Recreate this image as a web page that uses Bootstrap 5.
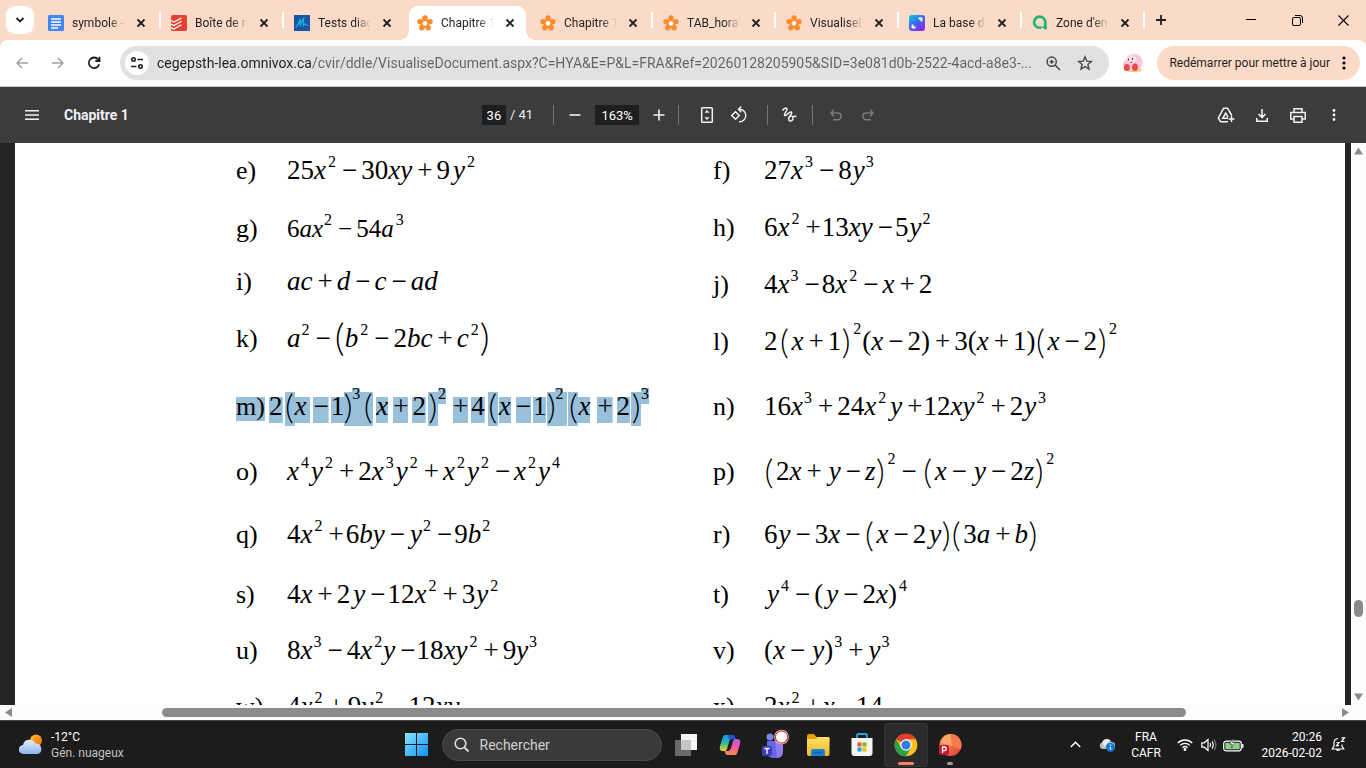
<!DOCTYPE html>
<html lang="fr">
<head>
<meta charset="utf-8">
<meta name="viewport" content="width=device-width, initial-scale=1">
<title>Chapitre 1</title>
<link href="https://cdn.jsdelivr.net/npm/bootstrap@5.3.0/dist/css/bootstrap.min.css" rel="stylesheet">
<style>
:root{--peach:#fcdac8;--ink:#1f1f1f;--sel:#98c0da}
body{font-family:Roboto,"Open Sans",sans-serif;font-size:12px;line-height:16px;color:var(--ink);background:#242424;overflow:hidden}
button{border:0;background:none;padding:0;color:inherit;display:inline-flex;align-items:center;justify-content:center;flex:none}
svg{display:block;flex:none}
input{border:0;outline:0;padding:0;min-width:0}
/* tab strip */
.tabstrip{background:var(--peach);height:40px;padding-left:6px;flex:none}
.tablist{height:34px;gap:6px;margin-left:6px}
.tab-search{width:28px;height:28px;border-radius:9px;background:#fff;margin-top:6px}
.tab-item{width:117px;height:34px;padding:0 8px;gap:8px;position:relative}
.tab-item a{color:inherit;text-decoration:none;gap:8px}
.tab-item.sepd::after{content:"";position:absolute;width:2px;height:16px;background:#fff;top:6px;right:-4px}
.tab-name{width:53px;white-space:nowrap;-webkit-mask-image:linear-gradient(90deg,#000 70%,transparent);mask-image:linear-gradient(90deg,#000 70%,transparent)}
.tab-item.current{background:#fff;border-radius:9px 9px 0 0}
.tab-x{width:16px;height:16px}
.foot{position:absolute;bottom:0;width:10px;height:10px}
.foot-l{right:100%;background:radial-gradient(circle at 0 0,transparent 10px,#fff 10px)}
.foot-r{left:100%;background:radial-gradient(circle at 100% 0,transparent 10px,#fff 10px)}
.tab-new{width:28px;height:28px}
.win-b{width:46px;height:40px}
/* address bar */
.toolbar-wrap{background:var(--peach);flex:none}
.addr{background:#fff;height:47px;border-radius:8px 8px 0 0;border-bottom:1px solid #c8c8c8;padding:0 6px 0 4px}
.nav-b{width:36px;height:34px}
.nav-b:disabled{color:#a3a3a3}
.omni{height:34px;border-radius:17px;background:#e1e1e1;margin-left:8px;padding:0 8px 0 5px}
.site-b{width:24px;height:24px;border-radius:50%;background:#fff}
.url{font-size:14px;height:34px;background:linear-gradient(90deg,#1f1f1f 155px,#5f6368 155px);-webkit-background-clip:text;background-clip:text;-webkit-text-fill-color:transparent;margin-left:8px;text-overflow:ellipsis}
.omni-b{width:32px;height:32px;color:#474747}
.avatar-b{width:48px;height:34px}
.update-b{height:34px;border-radius:17px;background:var(--peach);padding:0 14px 0 12px;gap:12px}
/* pdf bar */
.pdfbar{height:56px;background:#3c3c3c;color:#f1f1f1;font-size:13px;padding:0 16px;flex:none}
.side{flex:1 1 0}
.pdfbar h1{font-size:14px;line-height:20px;font-weight:700;margin:0 0 0 16px}
.num-in{height:20px;background:#1e1e1e;color:#fff;text-align:center}
.w-24{width:24px}
.w-44{width:44px}
.rule{width:1px;height:20px;background:#757575}
.ib{width:32px;height:32px}
.ib:disabled{color:#7b7b7b}
/* document */
.viewer{flex:1 1 0;min-height:0;background:#242424}
.sheet{margin:0 6px 0 15px;background:#fff;overflow:hidden;padding:4px 0 0 221px;display:grid;grid-template-columns:minmax(0,477px) minmax(0,1fr);color:#000;font-family:"Liberation Serif",serif}
.plist{display:grid;align-content:start}
.p-left{grid-template-rows:59px 52px 57px 68px 65px 63px 60px 56px 56px 60px}
.p-right{grid-template-rows:57px 57px 57px 65px 65px 63px 60px 56px 56px 60px}
.prob{display:flex;align-items:baseline;font-size:27px;line-height:46px;white-space:nowrap;height:46px}
.prob dt{font-weight:400;font-size:26px;width:51px;flex:none}
.prob dd{margin:0}
.narrow dd{font-size:25px}
.prob sup{font-size:16px;line-height:16px;display:inline-block;vertical-align:12px;top:0;margin:0 1px 0 2px}
.prob sup.c{margin-left:1px}
.prob sup.hi{vertical-align:16px}
.o{display:inline-block;line-height:26px;margin:0 4px 0 5px}
.o.n{margin-right:2px}
.o.k{margin-right:1px}
.bp{display:inline-flex;justify-content:center;width:10px;font-family:Lato,"Liberation Serif",serif;font-weight:300;font-size:34px;line-height:34px;vertical-align:-4px}
.bp.op{margin:0 2px}
.bp.o1{margin:0 2px 0 0}
.bp.xl{font-size:38px}
.t{margin-left:3px}
.u{margin-left:1px}
/* selected line */
.sel dt{width:33px;line-height:24px}
.sel mark{padding:0;color:#000;background:none}
.sel dt mark{background:linear-gradient(var(--sel),var(--sel)) bottom/100% 24px no-repeat}
.sel dd mark{display:inline-block;line-height:30px;height:32px;background:linear-gradient(var(--sel),var(--sel)) bottom/100% 26px no-repeat}
.sel dd mark.bp{display:inline-flex;line-height:34px;height:37px;background-size:100% 34px}
.sel dd mark.fill{width:20px;padding-right:12px;margin-right:-12px}
.sel sup{margin:0}
.sel sup mark{line-height:16px;height:18px;background-size:100% 16px}
.g1{margin-left:1px}
.g2{margin-left:2px}
.g3{margin-left:3px}
.g5{margin-left:5px}
.g7{margin-left:7px}
.g12{margin-left:12px}
.g20{margin-left:20px}
/* scrollbars */
.vbar{width:15px;background:#fcfcfc}
.hbar{height:15px;background:#fcfcfc;flex:none}
.vbar .track,.hbar .track{flex:1 1 0}
.thumb{background:#8b8b8b;border-radius:5px}
/* task bar */
.taskbar{height:48px;background:#1c1c1c;border-top:1px solid #444;color:#fff;padding:0 12px;flex:none}
.tb{width:44px;height:44px;position:relative}
.tb.on{background:#2b2b2b;border-radius:4px;box-shadow:inset 0 0 0 1px #363636}
.tb .dash{position:absolute;bottom:2px;width:16px;height:3px;border-radius:2px;background:#ff7f66}
.tb .dash.off{width:6px;background:#9a9a9a}
.find{width:220px;height:32px;border-radius:16px;background:#3a3a3a;border:1px solid #4b4b4b;margin:0 2px 0 3px;padding:0 11px;gap:10px}
.find input{background:none;color:#fff;font-size:14px;height:28px}
.find input::placeholder{color:#d0d0d0;opacity:1}
.tray-lang{width:46px}
.tray-clock{width:73px}
.muted-t{color:#c3c3c3}
</style>
<script src="https://cdn.jsdelivr.net/npm/bootstrap@5.3.0/dist/js/bootstrap.bundle.min.js"></script>
</head>
<body class="vh-100 d-flex flex-column">
<svg width="0" height="0" class="position-absolute" aria-hidden="true">
<defs>
<linearGradient id="gWin" x1="0" y1="0" x2="1" y2="1"><stop offset="0" stop-color="#8be4ff"/><stop offset="1" stop-color="#0a93f5"/></linearGradient>
<linearGradient id="gCanva" x1="0" y1="0" x2=".7" y2="1"><stop offset="0" stop-color="#00d0d8"/><stop offset=".5" stop-color="#3a6df0"/><stop offset="1" stop-color="#8a2be8"/></linearGradient>
<linearGradient id="gCloud" x1="0" y1="0" x2="0" y2="1"><stop offset="0" stop-color="#e6effc"/><stop offset="1" stop-color="#8fb3ee"/></linearGradient>
<linearGradient id="gSun" x1="0" y1="0" x2="1" y2="1"><stop offset="0" stop-color="#ffc32e"/><stop offset="1" stop-color="#f0640f"/></linearGradient>
<linearGradient id="gFold" x1="0" y1="0" x2="0" y2="1"><stop offset="0" stop-color="#ffdf6b"/><stop offset="1" stop-color="#f9b91f"/></linearGradient>
<linearGradient id="gCopA" x1="0" y1="0" x2="0" y2="1"><stop offset="0" stop-color="#1a8fe8"/><stop offset=".5" stop-color="#2fb9a0"/><stop offset="1" stop-color="#f2d21c"/></linearGradient>
<linearGradient id="gCopB" x1="0" y1="0" x2="0" y2="1"><stop offset="0" stop-color="#a45cf0"/><stop offset=".5" stop-color="#f0569c"/><stop offset="1" stop-color="#ff8a4c"/></linearGradient>
<linearGradient id="gPpt" x1="0" y1="0" x2="1" y2="1"><stop offset="0" stop-color="#ffb04f"/><stop offset="1" stop-color="#e0343f"/></linearGradient>
<symbol id="flower" viewBox="0 0 16 16"><g fill="#ff8b2e"><circle cx="8" cy="3" r="2.700"/><circle cx="13" cy="6.600" r="2.700"/><circle cx="11.200" cy="12.700" r="2.700"/><circle cx="4.800" cy="12.700" r="2.700"/><circle cx="3" cy="6.600" r="2.700"/><circle cx="8" cy="8.400" r="4.600"/></g><circle cx="8" cy="8.400" r="2.300" fill="#fff"/></symbol>
<symbol id="x" viewBox="0 0 16 16"><path d="M4.500 4.500l7 7M11.500 4.500l-7 7" stroke="currentColor" stroke-width="1.800" fill="none"/></symbol>
</defs>
</svg>

<header class="tabstrip d-flex">
<button class="tab-search" aria-label="Rechercher dans les onglets"><svg width="10" height="10" viewBox="0 0 10 10"><path d="M1.500 3l3.500 3.500L8.500 3" fill="none" stroke="currentColor" stroke-width="1.800"/></svg></button>
<nav class="tablist d-flex mt-auto flex-fill">
<div class="tab-item sepd d-flex align-items-center"><a href="#" class="d-flex"><svg width="16" height="16" viewBox="0 0 16 16"><rect width="16" height="16" rx="1.500" fill="#4285f4"/><path d="M3 4h10M3 7h10M3 10h10M3 13h7" stroke="#fff" stroke-width="1.300"/></svg><span class="tab-name">symbole -</span></a><button class="tab-x" aria-label="Fermer"><svg width="16" height="16"><use href="#x"/></svg></button></div>
<div class="tab-item sepd d-flex align-items-center"><a href="#" class="d-flex"><svg width="16" height="16" viewBox="0 0 16 16"><rect width="16" height="16" rx="2" fill="#e44332"/><path d="M0 5.500l3 1.600L10.500 3M0 9l3 1.600 7.500-4.300M0 12.500l3 1.600 7.500-4.300" stroke="#fff" stroke-width="1.300" fill="none"/></svg><span class="tab-name">Boîte de r</span></a><button class="tab-x" aria-label="Fermer"><svg width="16" height="16"><use href="#x"/></svg></button></div>
<div class="tab-item d-flex align-items-center"><a href="#" class="d-flex"><svg width="16" height="16" viewBox="0 0 16 16"><rect width="16" height="16" fill="#1c54a4"/><path d="M2 12.500Q4.500 9 6.200 4 6 8 6.200 11 8 5 9.700 3.500 9 7 9.500 10.500q1-2 1.700-2 .3 2 2.800 2" stroke="#19b5e0" stroke-width="1.200" fill="none"/></svg><span class="tab-name">Tests diag</span></a><button class="tab-x" aria-label="Fermer"><svg width="16" height="16"><use href="#x"/></svg></button></div>
<div class="tab-item current d-flex align-items-center"><span class="foot foot-l"></span><a href="#" class="d-flex"><svg width="16" height="16"><use href="#flower"/></svg><span class="tab-name">Chapitre 1</span></a><button class="tab-x" aria-label="Fermer"><svg width="16" height="16"><use href="#x"/></svg></button><span class="foot foot-r"></span></div>
<div class="tab-item sepd d-flex align-items-center"><a href="#" class="d-flex"><svg width="16" height="16"><use href="#flower"/></svg><span class="tab-name">Chapitre 1</span></a><button class="tab-x" aria-label="Fermer"><svg width="16" height="16"><use href="#x"/></svg></button></div>
<div class="tab-item sepd d-flex align-items-center"><a href="#" class="d-flex"><svg width="16" height="16"><use href="#flower"/></svg><span class="tab-name">TAB_horai</span></a><button class="tab-x" aria-label="Fermer"><svg width="16" height="16"><use href="#x"/></svg></button></div>
<div class="tab-item sepd d-flex align-items-center"><a href="#" class="d-flex"><svg width="16" height="16"><use href="#flower"/></svg><span class="tab-name">VisualiseD</span></a><button class="tab-x" aria-label="Fermer"><svg width="16" height="16"><use href="#x"/></svg></button></div>
<div class="tab-item sepd d-flex align-items-center"><a href="#" class="d-flex"><svg width="16" height="16" viewBox="0 0 16 16"><rect width="16" height="16" rx="3" fill="url(#gCanva)"/><path d="M9.500 3.500h3v3M3.500 9.500v3h3" fill="none" stroke="#fff" stroke-width="1.800"/></svg><span class="tab-name">La base de</span></a><button class="tab-x" aria-label="Fermer"><svg width="16" height="16"><use href="#x"/></svg></button></div>
<div class="tab-item sepd d-flex align-items-center"><a href="#" class="d-flex"><svg width="16" height="16" viewBox="0 0 16 16"><path d="M13.300 13.600V7.300A5.600 5.600 0 1 0 7.700 12.800h1.500" fill="none" stroke="#1fb07a" stroke-width="2.600"/><path d="M8 11.500h6.600V15z" fill="#1fb07a"/></svg><span class="tab-name">Zone d'en</span></a><button class="tab-x" aria-label="Fermer"><svg width="16" height="16"><use href="#x"/></svg></button></div>
<button class="tab-new" aria-label="Nouvel onglet"><svg width="12" height="12" viewBox="0 0 12 12"><path d="M6 1v10M1 6h10" stroke="currentColor" stroke-width="1.800"/></svg></button>
</nav>
<div class="d-flex">
<button class="win-b" aria-label="Réduire"><svg width="10" height="10" viewBox="0 0 10 10"><path d="M0 4.500h10" stroke="#000"/></svg></button>
<button class="win-b" aria-label="Restaurer"><svg width="11" height="11" viewBox="0 0 11 11"><rect x=".5" y="2.500" width="8" height="8" rx="1.500" fill="none" stroke="#000"/><path d="M3 .5h5a2.500 2.500 0 0 1 2.500 2.500v5" fill="none" stroke="#000"/></svg></button>
<button class="win-b" aria-label="Fermer la fenêtre"><svg width="11" height="11" viewBox="0 0 11 11"><path d="M.5.5l10 10M10.500.5l-10 10" stroke="#000" stroke-width="1.100"/></svg></button>
</div>
</header>

<div class="toolbar-wrap"><div class="addr d-flex align-items-center">
<button class="nav-b" disabled aria-label="Précédent"><svg width="12" height="12" viewBox="0 0 12 12"><path d="M12 6H1M6 1L1 6l5 5" fill="none" stroke="currentColor" stroke-width="1.500"/></svg></button>
<button class="nav-b" disabled aria-label="Suivant"><svg width="12" height="12" viewBox="0 0 12 12"><path d="M0 6h11M6 1l5 5-5 5" fill="none" stroke="currentColor" stroke-width="1.500"/></svg></button>
<button class="nav-b" aria-label="Actualiser"><svg width="14" height="14" viewBox="0 0 14 14"><path d="M12.200 8.300a5.300 5.300 0 1 1-1-4.900L12.300 4.800M12.500.8v4.200H8.300" fill="none" stroke="currentColor" stroke-width="1.800"/></svg></button>
<div class="omni d-flex align-items-center flex-fill">
<button class="site-b" aria-label="Informations du site"><svg width="14" height="14" viewBox="0 0 14 14" fill="none" stroke="#1f1f1f" stroke-width="1.600"><circle cx="3.500" cy="3.500" r="1.700"/><path d="M7.500 3.500H13M1 10.500h5.500"/><circle cx="10.500" cy="10.500" r="1.700"/></svg></button>
<input class="url flex-fill" aria-label="Adresse" value="cegepsth-lea.omnivox.ca/cvir/ddle/VisualiseDocument.aspx?C=HYA&amp;E=P&amp;L=FRA&amp;Ref=20260128205905&amp;SID=3e081d0b-2522-4acd-a8e3-...">
<button class="omni-b" aria-label="Zoom"><svg width="15" height="15" viewBox="0 0 15 15" fill="none" stroke="currentColor" stroke-width="1.500"><circle cx="5.700" cy="5.700" r="4.600"/><path d="M9 9l5 5"/><path d="M5.700 3.700v4M3.700 5.700h4" stroke-width="1.600"/></svg></button>
<button class="omni-b" aria-label="Ajouter aux favoris"><svg width="16" height="16" viewBox="0 0 16 16"><path d="M8 1.800l1.800 4.300 4.600.4-3.500 3 1.100 4.500L8 11.600 4 14l1.100-4.500-3.500-3 4.600-.4z" fill="none" stroke="currentColor" stroke-width="1.400"/></svg></button>
</div>
<button class="avatar-b" aria-label="Profil"><svg width="20" height="20" viewBox="0 0 20 20"><ellipse cx="11" cy="17" rx="8" ry="2" fill="#f4cf5a"/><ellipse cx="2.600" cy="11" rx="2.200" ry="3" fill="#f3b8d2"/><circle cx="11" cy="9.500" r="8.700" fill="#f8c9de"/><circle cx="9" cy="6" r="4" fill="#fbdcea"/><ellipse cx="3.800" cy="14.500" rx="3" ry="3.600" fill="#ee4a4f"/><ellipse cx="12" cy="14.300" rx="3" ry="3.700" fill="#ee4a4f"/><path d="M5.500 5.500v2M9.500 5v2" stroke="#6a3550" stroke-width="1"/><path d="M7 9.300q1 .8 2-.2" stroke="#b8406a" fill="none"/></svg></button>
<button class="update-b"><span>Redémarrer pour mettre à jour</span><svg width="4" height="14" viewBox="0 0 4 14"><circle cx="2" cy="2" r="1.600"/><circle cx="2" cy="7" r="1.600"/><circle cx="2" cy="12" r="1.600"/></svg></button>
</div></div>

<div class="pdfbar d-flex align-items-center">
<div class="side d-flex align-items-center"><button class="ib" aria-label="Menu"><svg width="14" height="10" viewBox="0 0 14 10"><path d="M0 .8h14M0 5h14M0 9.200h14" stroke="currentColor" stroke-width="1.400"/></svg></button><h1>Chapitre 1</h1></div>
<div class="d-flex align-items-center">
<input class="num-in w-24" aria-label="Page" value="36"><span class="ms-1">/&nbsp;</span><span>41</span>
<span class="rule g20"></span>
<button class="ib g5" aria-label="Zoom arrière"><svg width="12" height="12" viewBox="0 0 12 12"><path d="M.5 6h11" stroke="currentColor" stroke-width="1.600"/></svg></button>
<input class="num-in w-44 ms-1" aria-label="Niveau de zoom" value="163%">
<button class="ib ms-1" aria-label="Zoom avant"><svg width="12" height="12" viewBox="0 0 12 12"><path d="M.5 6h11M6 .5v11" stroke="currentColor" stroke-width="1.600"/></svg></button>
<span class="rule g3"></span>
<button class="ib g12" aria-label="Ajuster à la page"><svg width="14" height="18" viewBox="0 0 14 18"><rect x="1.700" y="1.700" width="10.600" height="14.600" rx=".8" fill="none" stroke="currentColor" stroke-width="1.500"/><path d="M7 4L4.500 6.800h5zM7 14l-2.500-2.800h5z" fill="currentColor"/></svg></button>
<button class="ib" aria-label="Faire pivoter"><svg width="18" height="18" viewBox="0 0 18 18" fill="none" stroke="currentColor" stroke-width="1.500"><path d="M5.500 5.700L9.300 9.500l-3.800 3.800L1.700 9.500z"/><path d="M8.500 3.300a6.300 6.300 0 1 1 .5 12.500M11.300.5L8.500 3.300l2.800 2.900"/></svg></button>
<span class="rule g12"></span>
<button class="ib g5" aria-label="Dessiner"><svg width="16" height="16" viewBox="0 0 16 16"><path d="M1.500 3.500C3 1.200 5.500.3 6 2 6.500 4 2.500 6.500 3.500 8.300 4.800 10 8 4 10.200 5 12.500 6.200 6.500 10 7.800 12.800c1.500 2.700 4.700.4 4.200-2.300-.4-2-3.500-2.200-4.200-.3M11 10.200c1.500-1.200 3-1.200 4.500-.7" fill="none" stroke="currentColor" stroke-width="1.500"/></svg></button>
<span class="rule g7"></span>
<button class="ib g7" disabled aria-label="Annuler"><svg width="12" height="12" viewBox="0 0 12 12"><path d="M4 .8L1 4l3 3.200M1 4h6.800a3.300 3.300 0 0 1 0 6.700H3" fill="none" stroke="currentColor" stroke-width="1.500"/></svg></button>
<button class="ib" disabled aria-label="Rétablir"><svg width="12" height="12" viewBox="0 0 12 12"><path d="M8 .8L11 4 8 7.200M11 4H4.200a3.300 3.300 0 0 0 0 6.700H9" fill="none" stroke="currentColor" stroke-width="1.500"/></svg></button>
</div>
<div class="side d-flex align-items-center justify-content-end gap-1">
<button class="ib" aria-label="Enregistrer dans Drive"><svg width="18" height="16" viewBox="0 0 18 16" fill="none" stroke="currentColor" stroke-width="1.500"><path d="M11 14.700H3.600L1.300 11 6.600 1.300h4l4.200 7.200M11 11.300H5.800l2.900-5.200 2.300 4"/><path d="M14.500 9v6M11.500 12h6"/></svg></button>
<button class="ib" aria-label="Télécharger"><svg width="12" height="13" viewBox="0 0 12 13" fill="none" stroke="currentColor" stroke-width="1.600"><path d="M6 0v8.500M2.500 5L6 8.500 9.500 5M.8 9v3.200h10.400V9"/></svg></button>
<button class="ib" aria-label="Imprimer"><svg width="16" height="15" viewBox="0 0 16 15" fill="none" stroke="currentColor" stroke-width="1.500"><path d="M4 4V.8h8V4M4 11H.8V4.500h14.400V11H12"/><path d="M4 8.500h8v5.700H4z"/></svg></button>
<button class="ib" aria-label="Plus"><svg width="4" height="14" viewBox="0 0 4 14" fill="currentColor"><circle cx="2" cy="2.500" r="1.400"/><circle cx="2" cy="7" r="1.400"/><circle cx="2" cy="11.500" r="1.400"/></svg></button>
</div>
</div>

<main class="viewer d-flex"><article class="sheet flex-fill">
<dl class="plist p-left mb-0">
<div class="prob"><dt>e)</dt><dd>25<i>x</i><sup>2</sup><span class="o">−</span>30<i>xy</i><span class="o">+</span>9<i class="t">y</i><sup>2</sup></dd></div>
<div class="prob narrow"><dt>g)</dt><dd>6<i>ax</i><sup class="c">2</sup><span class="o">−</span>54<i>a</i><sup>3</sup></dd></div>
<div class="prob"><dt>i)</dt><dd><i>ac</i><span class="o">+</span><i>d</i><span class="o">−</span><i>c</i><span class="o">−</span><i>ad</i></dd></div>
<div class="prob"><dt>k)</dt><dd><i>a</i><sup class="c">2</sup><span class="o">−</span><span class="bp xl">(</span><i>b</i><sup>2</sup><span class="o">−</span>2<i>bc</i><span class="o">+</span><i>c</i><sup>2</sup><span class="bp xl">)</span></dd></div>
<div class="prob sel"><dt><mark>m)</mark></dt><dd><mark>2</mark><mark class="bp g2">(</mark><mark class="pe-1"><i>x</i></mark><mark class="g3">−</mark><mark class="g2">1</mark><mark class="bp fill">)</mark><sup class="hi"><mark>3</mark></sup><mark class="bp g3">(</mark><mark class="g3"><i>x</i></mark><mark class="g5">+</mark><mark class="ms-1">2</mark><mark class="bp g2">)</mark><sup class="hi"><mark>2</mark></sup><mark class="g7">+</mark><mark class="g3">4</mark><mark class="bp g3">(</mark><mark class="g1"><i>x</i></mark><mark class="g5">−</mark><mark class="g2">1</mark><mark class="bp fill g1">)</mark><sup class="hi"><mark>2</mark></sup><mark class="bp g5">(</mark><mark><i>x</i></mark><mark class="g7">+</mark><mark class="ms-1">2</mark><mark class="bp g1">)</mark><sup class="hi"><mark>3</mark></sup></dd></div>
<div class="prob"><dt>o)</dt><dd><i>x</i><sup>4</sup><i class="u">y</i><sup>2</sup><span class="o">+</span>2<i>x</i><sup>3</sup><i class="u">y</i><sup>2</sup><span class="o">+</span><i>x</i><sup>2</sup><i class="u">y</i><sup>2</sup><span class="o">−</span><i>x</i><sup>2</sup><i class="u">y</i><sup>4</sup></dd></div>
<div class="prob"><dt>q)</dt><dd>4<i>x</i><sup>2</sup><span class="o n">+</span>6<i>by</i><span class="o n">−</span><i class="t">y</i><sup class="c">2</sup><span class="o n">−</span>9<i>b</i><sup class="c">2</sup></dd></div>
<div class="prob"><dt>s)</dt><dd>4<i>x</i><span class="o">+</span>2<i class="t">y</i><span class="o n">−</span>12<i>x</i><sup>2</sup><span class="o">+</span>3<i class="u">y</i><sup>2</sup></dd></div>
<div class="prob"><dt>u)</dt><dd>8<i>x</i><sup class="c">3</sup><span class="o">−</span>4<i>x</i><sup>2</sup><i>y</i><span class="o k">−</span>18<i>xy</i><sup>2</sup><span class="o">+</span>9<i>y</i><sup class="c">3</sup></dd></div>
<div class="prob"><dt>w)</dt><dd>4<i>x</i><sup>2</sup><span class="o">+</span>9<i>y</i><sup>2</sup><span class="o">−</span>12<i>xy</i></dd></div>
</dl>
<dl class="plist p-right mb-0">
<div class="prob"><dt>f)</dt><dd>27<i>x</i><sup>3</sup><span class="o">−</span>8<i class="u">y</i><sup class="c">3</sup></dd></div>
<div class="prob"><dt>h)</dt><dd>6<i>x</i><sup>2</sup><span class="o k">+</span>13<i>xy</i><span class="o n">−</span>5<i class="u">y</i><sup class="c">2</sup></dd></div>
<div class="prob"><dt>j)</dt><dd>4<i>x</i><sup class="c">3</sup><span class="o n">−</span>8<i>x</i><sup>2</sup><span class="o">−</span><i>x</i><span class="o">+</span>2</dd></div>
<div class="prob"><dt>l)</dt><dd>2<span class="bp op">(</span><i>x</i><span class="o">+</span>1<span class="bp">)</span><sup class="hi">2</sup>(<i>x</i><span class="o">−</span>2)<span class="o">+</span>3(<i>x</i><span class="o">+</span>1)<span class="bp o1">(</span><i>x</i><span class="o">−</span>2<span class="bp">)</span><sup class="hi">2</sup></dd></div>
<div class="prob"><dt>n)</dt><dd>16<i>x</i><sup class="c">3</sup><span class="o">+</span>24<i>x</i><sup>2</sup><i class="t">y</i><span class="o k">+</span>12<i>xy</i><sup>2</sup><span class="o">+</span>2<i class="u">y</i><sup>3</sup></dd></div>
<div class="prob"><dt>p)</dt><dd><span class="bp o1">(</span>2<i>x</i><span class="o">+</span><i class="t">y</i><span class="o">−</span><i>z</i><span class="bp">)</span><sup class="hi">2</sup><span class="o">−</span><span class="bp op">(</span><i>x</i><span class="o">−</span><i class="t">y</i><span class="o">−</span>2<i>z</i><span class="bp">)</span><sup class="hi">2</sup></dd></div>
<div class="prob"><dt>r)</dt><dd>6<i class="u">y</i><span class="o">−</span>3<i>x</i><span class="o">−</span><span class="bp o1">(</span><i>x</i><span class="o">−</span>2<i class="t">y</i><span class="bp">)</span><span class="bp o1">(</span>3<i>a</i><span class="o">+</span><i>b</i><span class="bp">)</span></dd></div>
<div class="prob"><dt>t)</dt><dd><i class="t">y</i><sup>4</sup><span class="o">−</span>(<i class="t">y</i><span class="o">−</span>2<i>x</i>)<sup>4</sup></dd></div>
<div class="prob"><dt>v)</dt><dd>(<i>x</i><span class="o">−</span><i class="t">y</i>)<sup class="c">3</sup><span class="o n">+</span><i class="t">y</i><sup class="c">3</sup></dd></div>
<div class="prob"><dt>x)</dt><dd>2<i>x</i><sup>2</sup><span class="o n">+</span><i>x</i><span class="o k">−</span>14</dd></div>
</dl>
</article>
<div class="vbar d-flex flex-column align-items-center py-1">
<svg width="9" height="8" viewBox="0 0 9 8"><path d="M4.500.5L9 7.500H0z" fill="#8b8b8b"/></svg>
<div class="track d-flex flex-column align-self-stretch align-items-center"><span style="flex:445 0 0"></span><span class="thumb" style="flex:17 0 0;width:9px"></span><span style="flex:76 0 0"></span></div>
<svg width="9" height="8" viewBox="0 0 9 8"><path d="M4.500 7.500L9 .5H0z" fill="#8b8b8b"/></svg>
</div>
</main>
<div class="hbar d-flex align-items-center">
<svg class="ms-1" width="9" height="9" viewBox="0 0 9 9"><path d="M1 4.500L8 0v9z" fill="#8b8b8b"/></svg>
<div class="track d-flex"><span style="flex:149 0 0"></span><span class="thumb" style="flex:1021 0 0;height:9px"></span><span style="flex:155 0 0"></span></div>
<svg class="me-3" width="9" height="9" viewBox="0 0 9 9"><path d="M8 4.500L1 0v9z" fill="#8b8b8b"/></svg>
</div>

<footer class="taskbar d-flex align-items-center">
<div class="side d-flex align-items-center">
<svg class="g7" width="24" height="21" viewBox="0 0 24 21"><circle cx="17" cy="6.500" r="6" fill="url(#gSun)"/><path d="M4.500 20a4.500 4.500 0 0 1-.5-9 6.500 6.500 0 0 1 12.300-1.500A5.500 5.500 0 0 1 19 20z" fill="url(#gCloud)"/></svg>
<div class="ms-2"><div>-12°C</div><div class="muted-t">Gén. nuageux</div></div>
</div>
<div class="d-flex align-items-center">
<button class="tb" aria-label="Démarrer"><svg width="23" height="23" viewBox="0 0 23 23"><path d="M0 0h11v11H0zM12 0h11v11H12zM0 12h11v11H0zM12 12h11v11H12z" fill="url(#gWin)"/></svg></button>
<label class="find d-flex align-items-center"><svg width="16" height="16" viewBox="0 0 16 16"><circle cx="6.500" cy="6.500" r="5.300" fill="none" stroke="#e0e0e0" stroke-width="1.600"/><path d="M10.500 10.500l4 4" stroke="#e0e0e0" stroke-width="1.800"/></svg><input type="search" class="flex-fill" placeholder="Rechercher" aria-label="Rechercher"></label>
<button class="tb" aria-label="Affichage des tâches"><svg width="22" height="22" viewBox="0 0 22 22"><rect y="6" width="16" height="16" fill="#6a6a6a"/><rect x="6" width="16" height="16" fill="#f4f4f4"/><rect x="6" y="6" width="10" height="10" fill="#c6c6c6"/></svg></button>
<button class="tb" aria-label="Copilot"><svg width="22" height="22" viewBox="0 0 22 22"><path d="M6 1h7.500c1.500 0 2 1 2.500 2.500l.5 1.500h-3c-2 0-3 1.500-3.500 3L8 15c-.5 1.500-1 2-2.500 2H3.500C.5 17 .5 14 1 12L3.500 4C4 2 4.500 1 6 1z" fill="url(#gCopA)"/><path d="M13.500 1c1.500 0 2 1 2.500 2.500l.5 1.500h-3c-1.500 0-2.500 1-3 2L9 1z" fill="#1c56d6"/><path d="M16 21H8.500C7 21 6.500 20 6 18.500L5.500 17h3c2 0 3-1.500 3.500-3l2-7c.5-1.500 1-2 2.500-2h2c3 0 3 3 2.500 5l-2.500 8c-.5 2-1 3-2.500 3z" fill="url(#gCopB)"/></svg></button>
<button class="tb" aria-label="Teams"><svg width="30" height="32" viewBox="0 0 30 32"><circle cx="11" cy="8" r="3.500" fill="#7b83f0"/><path d="M8 12h13a3 3 0 0 1 3 3v8a6 6 0 0 1-6 6h-4a6 6 0 0 1-6-6z" fill="#6467e6"/><path d="M16 12h6a2 2 0 0 1 2 2v9a6 6 0 0 1-6 6z" fill="#8f7cf5"/><rect x="3" y="17" width="10" height="10" rx="2" fill="#3a3fb5"/><path d="M5.500 19.500h5M8 19.500V25" stroke="#fff" stroke-width="1.300"/><circle cx="22.500" cy="8" r="7.300" fill="#fff"/><circle cx="22.500" cy="8" r="6.200" fill="#fff" stroke="#d13438" stroke-width="1.300"/></svg></button>
<button class="tb" aria-label="Explorateur de fichiers"><svg width="24" height="22" viewBox="0 0 24 22"><path d="M1 2a2 2 0 0 1 2-2h5l2.500 3H22a1.500 1.500 0 0 1 1.500 1.500V8H1z" fill="#e3a008"/><path d="M1 5h9l2-2h10a1.500 1.500 0 0 1 1.500 1.500V20a2 2 0 0 1-2 2H3a2 2 0 0 1-2-2z" fill="url(#gFold)"/><path d="M5 22v-5a2 2 0 0 1 2-2h10a2 2 0 0 1 2 2v5z" fill="#1683d8"/><path d="M8 18.500h8" stroke="#0b5ea8" stroke-width="1.500"/></svg></button>
<button class="tb" aria-label="Microsoft Store"><svg width="22" height="24" viewBox="0 0 22 24"><path d="M6 6V2.500A1.500 1.500 0 0 1 7.500 1h7A1.500 1.500 0 0 1 16 2.500V6" fill="none" stroke="#22a7e8" stroke-width="1.800"/><path d="M.5 5h21v15a3 3 0 0 1-3 3h-15a3 3 0 0 1-3-3z" fill="#f4f4f4"/><path d="M6.500 9.500h4v4h-4z" fill="#f25022"/><path d="M11.500 9.500h4v4h-4z" fill="#7fba00"/><path d="M6.500 14.500h4v4h-4z" fill="#00a4ef"/><path d="M11.500 14.500h4v4h-4z" fill="#ffb900"/></svg></button>
<button class="tb on" aria-label="Chrome"><svg width="24" height="24" viewBox="0 0 24 24"><circle cx="12" cy="12" r="11.300" fill="#fbc116"/><path d="M12 12L2.200 6.350A11.300 11.300 0 0 1 21.800 6.350H12z" fill="#e33b2e"/><path d="M2.200 6.350A11.300 11.300 0 0 0 12 23.300L16.900 14.800 12 12 7.100 14.800z" fill="#2da04e"/><circle cx="12" cy="12" r="5.700" fill="#fff"/><circle cx="12" cy="12" r="4.500" fill="#2f7de8"/></svg><span class="dash"></span></button>
<button class="tb" aria-label="PowerPoint"><svg width="24" height="24" viewBox="0 0 24 24"><circle cx="12.500" cy="12" r="11" fill="url(#gPpt)"/><path d="M12.500 1a11 11 0 0 1 10 15.500L14 13z" fill="#f7794c"/><path d="M12.500 1L14 13l-11-3A11 11 0 0 1 12.500 1z" fill="#fba668"/><rect x="1" y="12" width="10" height="10" rx="2" fill="#c01c34"/><path d="M4.500 20v-6h2a1.800 1.800 0 0 1 0 3.600h-2" fill="none" stroke="#fff" stroke-width="1.300"/></svg><span class="dash off"></span></button>
</div>
<div class="side d-flex align-items-center justify-content-end">
<button class="ib" aria-label="Icônes masquées"><svg width="11" height="7" viewBox="0 0 11 7"><path d="M.8 6l4.700-4.700L10.200 6" fill="none" stroke="#fff" stroke-width="1.500"/></svg></button>
<button class="ib" aria-label="OneDrive"><svg width="16" height="14" viewBox="0 0 16 14"><path d="M4 11a3.500 3.500 0 0 1-.8-6.800A5 5 0 0 1 12.500 4 3.500 3.500 0 0 1 13 11z" fill="#bdbdbd"/><path d="M3.500 4.500A4.500 4.500 0 0 1 11 2.500L5 9z" fill="#ececec"/><circle cx="11.500" cy="9.300" r="4.500" fill="#0a7bd8"/><path d="M11.500 8.800v3M11.500 6.600v1.200" stroke="#fff" stroke-width="1.200"/></svg></button>
<div class="tray-lang text-center"><div>FRA</div><div>CAFR</div></div>
<button class="ib" aria-label="Wi-Fi"><svg width="16" height="13" viewBox="0 0 16 13" fill="none" stroke="#fff" stroke-width="1.300"><path d="M.8 5a10.200 10.200 0 0 1 14.400 0M3.200 7.400a6.800 6.800 0 0 1 9.600 0M5.500 9.700a3.600 3.600 0 0 1 5 0"/><circle cx="8" cy="11.500" r=".8" fill="#fff"/></svg></button>
<svg width="16" height="14" viewBox="0 0 16 14" fill="none" stroke="#fff" stroke-width="1.200"><path d="M.8 4.800h2.500L7 1.500v11L3.300 9.200H.8z"/><path d="M9 5q1.200 2 0 4M11 3.300q2.500 3.700 0 7.400"/><path d="M13 1.500q3.800 5.500 0 11" stroke="#777"/></svg>
<button class="ib" aria-label="Batterie"><svg width="21" height="14" viewBox="0 0 21 14"><rect x=".7" y="3.200" width="17.600" height="9.600" rx="2.500" fill="none" stroke="#fff" stroke-width="1.200"/><rect x="2.300" y="4.800" width="14.400" height="6.400" rx="1" fill="#8ed08a"/><path d="M19.800 6v4" stroke="#fff" stroke-width="1.300"/><path d="M10.500 0L6.500 6h2.800L8.500 10l4-5.500H9.700z" fill="#fff" stroke="#1c1c1c" stroke-width=".6"/></svg></button>
<div class="tray-clock text-end"><div>20:26</div><div>2026-02-02</div></div>
<button class="ib" aria-label="Notifications"><svg width="15" height="15" viewBox="0 0 15 15" fill="none" stroke="#fff" stroke-width="1.200"><path d="M7 1.500C4.500 1.800 3 3.800 3 6v3L1.200 12h11.600L11 9V7.500M5.500 12.500a1.700 1.700 0 0 0 3 0"/><path d="M5.500 5.500H8l-2.500 3.200H8M10.500.8H13.500L10.500 4.500H13.500"/></svg></button>
</div>
</footer>
</body>
</html>
